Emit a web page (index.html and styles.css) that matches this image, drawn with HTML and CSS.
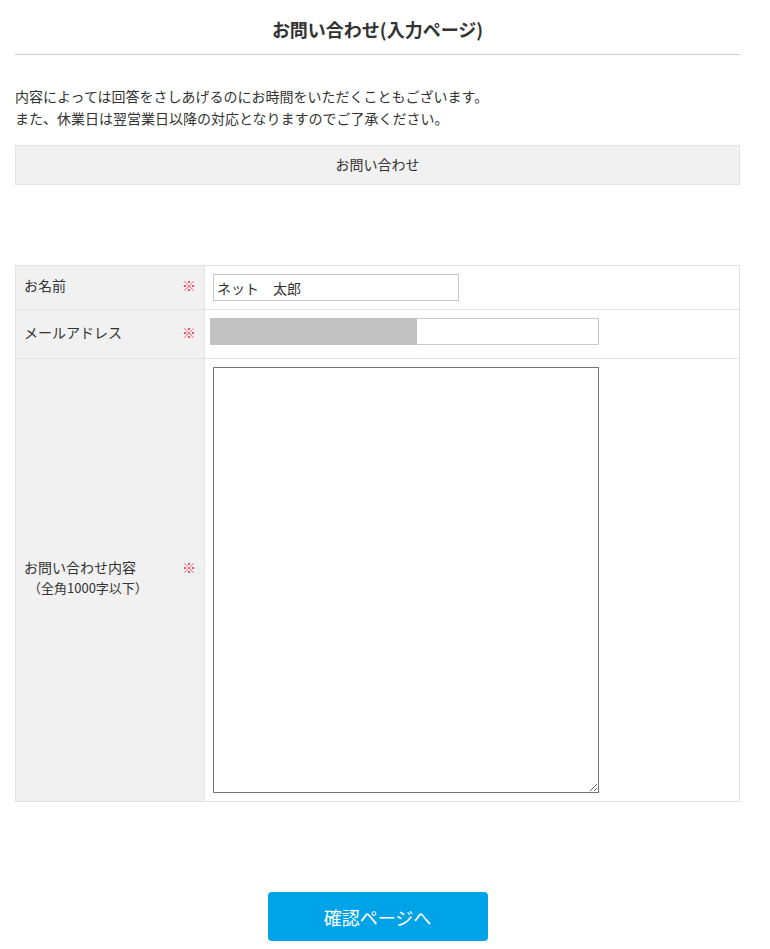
FILE: index.html
```html
<!DOCTYPE html>
<html lang="ja">
<head>
    <meta charset="utf-8">
    <link rel="stylesheet" href="styles.css">
</head>
<body>
    <div class="page">
        <h1 class="page-title">お問い合わせ(入力ページ)</h1>

        <p class="lead">
            内容によっては回答をさしあげるのにお時間をいただくこともございます。<br>
            また、休業日は翌営業日以降の対応となりますのでご了承ください。
        </p>

        <div class="section-head">お問い合わせ</div>

        <table class="form-table">
            <tr class="row-name">
                <th>
                    <div class="label">
                        <div>お名前</div>
                        <span class="req">※</span>
                    </div>
                </th>
                <td><input type="text" class="input-name" value="ネット　太郎"></td>
            </tr>
            <tr class="row-mail">
                <th>
                    <div class="label">
                        <div>メールアドレス</div>
                        <span class="req">※</span>
                    </div>
                </th>
                <td>
                    <div class="mail-wrap">
                        <input type="text" class="input-mail">
                        <div class="mask"></div>
                    </div>
                </td>
            </tr>
            <tr class="row-body">
                <th>
                    <div class="label">
                        <div>お問い合わせ内容<br><span class="note">（全角1000字以下）</span></div>
                        <span class="req">※</span>
                    </div>
                </th>
                <td><textarea class="input-body"></textarea></td>
            </tr>
        </table>

        <div class="actions">
            <button class="btn-confirm">確認ページへ</button>
        </div>
    </div>
</body>
</html>
```

FILE: styles.css
```css
body {
    margin: 0;
    font-family: "Noto Sans CJK JP", "Noto Sans", sans-serif;
    color: #333;
    background: #fff;
}

.page {
    padding: 0 30px 0 15px;
}

.page-title {
    margin: 0;
    padding: 17px 0 13px;
    font-size: 18px;
    line-height: 24px;
    font-weight: bold;
    text-align: center;
    border-bottom: 1px solid #d0d0d0;
}

.lead {
    margin: 30px 0 0;
    font-size: 14px;
    line-height: 22px;
}

.section-head {
    margin-top: 16px;
    height: 38px;
    line-height: 37px;
    background: #f1f1f1;
    border: 1px solid #e3e3e3;
    text-align: center;
    font-size: 14px;
}

.form-table {
    width: 100%;
    margin-top: 80px;
    border-collapse: collapse;
    font-size: 14px;
}

.form-table th,
.form-table td {
    border: 1px solid #e3e3e3;
    padding: 0;
}

.form-table th {
    width: 172px;
    background: #f1f1f1;
    font-weight: normal;
    text-align: left;
    padding: 0 8px 5px;
}

.label {
    display: flex;
    justify-content: space-between;
    align-items: flex-start;
    line-height: 20px;
}

.req {
    color: #e8334a;
    font-size: 14px;
}

.note {
    font-size: 13px;
    padding-left: 4px;
}

.form-table td {
    padding: 8px;
}

.row-name {
    height: 44px;
}

.row-mail {
    height: 49px;
}

.row-mail td {
    padding: 8px 8px 13px 5px;
    vertical-align: top;
}

input,
textarea {
    font-family: inherit;
    font-size: 14px;
    color: #333;
    box-sizing: border-box;
    margin: 0;
}

.input-name {
    display: block;
    width: 246px;
    height: 27px;
    border: 1px solid #c8c8c8;
    padding: 0 3px;
}

.mail-wrap {
    position: relative;
    width: 389px;
    height: 27px;
}

.input-mail {
    display: block;
    width: 389px;
    height: 27px;
    border: 1px solid #c8c8c8;
}

.mask {
    position: absolute;
    left: 0;
    top: 0;
    width: 207px;
    height: 27px;
    background: #c1c1c1;
}

.input-body {
    display: block;
    width: 386px;
    height: 426px;
    border: 1px solid #767676;
    resize: vertical;
}

.actions {
    margin-top: 90px;
    text-align: center;
}

.btn-confirm {
    width: 220px;
    height: 49px;
    border: none;
    border-radius: 4px;
    background: #00a3e8;
    color: #fff;
    font-family: inherit;
    font-size: 18px;
    cursor: pointer;
}
```
